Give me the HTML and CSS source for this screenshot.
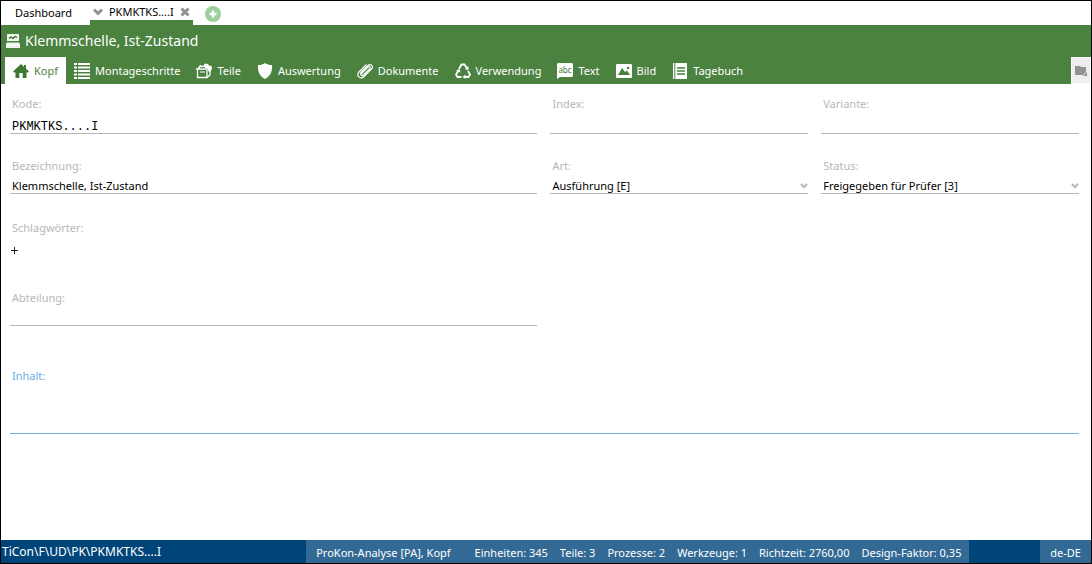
FILE: index.html
```html
<!DOCTYPE html>
<html lang="de">
<head>
<meta charset="utf-8">
<title>Klemmschelle, Ist-Zustand</title>
<link rel="stylesheet" href="styles.css">
</head>
<body>
<div class="app">
  <nav class="doc-tabs">
    <button class="doc-tab">Dashboard</button>
    <div class="doc-tab doc-tab-active">
      <svg class="chevron" viewBox="0 0 10 8"><path d="M1 1.500L5 5.500L9 1.500" fill="none" stroke="#929292" stroke-width="3"/></svg>
      <button class="doc-name">PKMKTKS....I</button>
      <button class="icon-button" aria-label="Schließen"><svg class="close" viewBox="0 0 10 10"><path d="M1.500 1.500L8.500 8.500M8.500 1.500L1.500 8.500" stroke="#929292" stroke-width="3"/></svg></button>
    </div>
    <button class="icon-button add" aria-label="Neu"><svg class="icon" viewBox="0 0 16 16"><circle cx="8" cy="8" r="8" fill="#9bcf9b"/><path d="M8 4.500V11.500M4.500 8H11.500" stroke="#fff" stroke-width="2.400"/></svg></button>
  </nav>

  <header class="header">
    <h1 class="title">
      <svg class="title-icon" viewBox="0 0 14 15"><path d="M1 0H13V7H1Z" fill="#eef4ec"/><path d="M3 4.500L5 3L7 4.500L9 2.500L11 3.500" fill="none" stroke="#33622a" stroke-width="1.200"/><path d="M1 8.500H13L14 10V14H0V10Z" fill="#eef4ec"/><path d="M1 11H13" stroke="#fff"/></svg>
      Klemmschelle, Ist-Zustand
    </h1>
    <div class="nav-row">
      <nav class="nav">
        <button class="nav-tab nav-tab-active"><svg class="icon" viewBox="0 0 16 16"><path d="M8 1L0 8.500L1.200 9.500H2.500V15H6.300V10H9.700V15H13.500V9.500H14.800L16 8.500L13 5.700V2H11V3.800Z" fill="#3f7834"/></svg>Kopf</button>
        <button class="nav-tab"><svg class="icon" viewBox="0 0 16 16"><path d="M0 1H3M0 4.500H3M0 8H3M0 11.500H3M0 15H3M4 1H16M4 4.500H16M4 8H16M4 11.500H16M4 15H16" stroke="#fff" stroke-width="1.800"/></svg>Montageschritte</button>
        <button class="nav-tab"><svg class="icon" viewBox="0 0 16 16"><path d="M1.500 6.500V14.500H11V6.500M11 14.500L14 12V6M0 6H11.500" fill="none" stroke="#fff" stroke-width="1.300"/><path d="M4 9H9" stroke="#fff"/><path d="M1 6L4 2L7 3L9 .500L12 1L13 2.500L15.500 3L16 6L14 9L12 8V6L10 5Z" fill="#fff"/><path d="M4 4.700H9" stroke="#47803c"/></svg>Teile</button>
        <button class="nav-tab"><svg class="icon" viewBox="0 0 16 16"><path d="M8 0C6 1.500 4 2 1 2C.500 9 3 13.500 8 16C13 13.500 15.500 9 15 2C12 2 10 1.500 8 0Z" fill="#fff"/></svg>Auswertung</button>
        <button class="nav-tab"><svg class="icon" viewBox="0 0 16 16"><path d="M4.500 10.500L10.500 4.500C12.500 2.500 14 4.500 12.500 6L7 11.500C4 14.500 3 10.500 4.500 9L11 2.500C13.500 0 17 3.500 14.500 6L7 13.500C3.500 17-1.500 12.500 2 9L9 2" fill="none" stroke="#fff" stroke-width="1.200" stroke-linecap="round"/></svg>Dokumente</button>
        <button class="nav-tab"><svg class="icon" viewBox="0 0 16 16"><path d="M4 6L6.500 1.500H9.500L12 5.500M13 8L15 11.500L13.500 14H9M6.500 14H2.500L1 11.500L3.500 7.500" fill="none" stroke="#fff" stroke-width="1.800"/><path d="M10 6.500L13.500 7V3ZM10.500 11.500L7.500 14L10.500 16ZM1 7.500L4.500 6L5.500 9.500Z" fill="#fff"/></svg>Verwendung</button>
        <button class="nav-tab"><svg class="icon" viewBox="0 0 16 16"><path d="M1 0H15L16 1V13L15 14H3L0 16V1Z" fill="#fff"/><text class="icon-letters" x="8" y="10" text-anchor="middle">abc</text></svg>Text</button>
        <button class="nav-tab"><svg class="icon" viewBox="0 0 16 16"><rect y="1" width="16" height="14" rx="1" fill="#fff"/><path d="M2 12L6 5L9 9L11 7.500L14 12Z" fill="#47803c"/><circle cx="12" cy="5" r="1.300" fill="#47803c"/></svg>Bild</button>
        <button class="nav-tab"><svg class="icon" viewBox="0 0 16 16"><path d="M1 0H2.300V16H1ZM3.300 0H15V16H3.300Z" fill="#fff"/><path d="M5 5H13M5 8H13M5 11H13" stroke="#47803c" stroke-width="1.300"/></svg>Tagebuch</button>
      </nav>
      <button class="folder-button" aria-label="Ordner"><svg class="folder" viewBox="0 0 14 12"><path d="M1 1H6L7 2H12V10H1Z" fill="#929292"/><path d="M8 11.500L13.500 6V11.500Z" fill="#929292" stroke="#eee"/></svg></button>
    </div>
  </header>

  <main class="form">
    <div class="field"><label for="kode">Kode:</label><input class="control control-tall mono" id="kode" value="PKMKTKS....I"></div>
    <div class="field"><label for="index">Index:</label><input class="control control-tall" id="index"></div>
    <div class="field"><label for="variante">Variante:</label><input class="control control-tall" id="variante"></div>
    <div class="field"><label for="bez">Bezeichnung:</label><input class="control" id="bez" value="Klemmschelle, Ist-Zustand"></div>
    <div class="field"><label for="art">Art:</label><select class="control" id="art"><option>Ausführung [E]</option></select><svg class="select-arrow" viewBox="0 0 8 6"><path d="M1 1L4 4L7 1" fill="none" stroke="#bcbcbc" stroke-width="2.400"/></svg></div>
    <div class="field"><label for="status">Status:</label><select class="control" id="status"><option>Freigegeben für Prüfer [3]</option></select><svg class="select-arrow" viewBox="0 0 8 6"><path d="M1 1L4 4L7 1" fill="none" stroke="#bcbcbc" stroke-width="2.400"/></svg></div>
    <div class="field tags"><span class="label">Schlagwörter:</span><button class="plus" aria-label="Schlagwort hinzufügen"><svg class="plus-icon" viewBox="0 0 7 7"><path d="M3.500 0V7M0 3.500H7" stroke="#222"/></svg></button></div>
    <div class="field department"><label for="abt">Abteilung:</label><input class="control" id="abt"></div>
    <div class="field content-field"><label for="inhalt">Inhalt:</label><textarea class="control content-text" id="inhalt"></textarea></div>
  </main>

  <footer class="status">
    <span class="path">TiCon\F\UD\PK\PKMKTKS....I</span>
    <div class="facts">
      <span class="module">ProKon-Analyse [PA], Kopf</span><span>Einheiten: 345</span><span>Teile: 3</span><span>Prozesse: 2</span><span>Werkzeuge: 1</span><span>Richtzeit: 2760,00</span><span>Design-Faktor: 0,35</span>
    </div>
    <span class="locale">de-DE</span>
  </footer>
</div>
</body>
</html>
```
FILE: styles.css
```css
* { box-sizing: border-box; }
body { margin: 0; font: 11px/16px "Noto Sans", "Open Sans", sans-serif; color: #000; background: #fff; }
button { margin: 0; padding: 0; border: 0; background: none; font: inherit; color: inherit; white-space: nowrap; }
svg { display: block; flex: none; }
.app { display: flex; flex-direction: column; min-height: 100vh; border: 1px solid #000; }
.icon { width: 16px; height: 16px; }

.doc-tabs { display: flex; height: 24px; }
.doc-tab { height: 24px; padding: 0 14px; }
.doc-tab-active { display: flex; align-items: center; gap: 6px; margin-left: 4px; padding: 3px 3px 0; border-bottom: 5px solid #4b823f; }
.chevron { width: 10px; height: 8px; }
.close { width: 10px; height: 10px; }
.add { margin-left: 12px; padding-top: 2px; }

.header { background: #4b823f; color: #fff; }
.title { display: flex; align-items: center; gap: 5px; height: 32px; margin: 0; padding: 0 5px; font-size: 14px; font-weight: 400; }
.title-icon { width: 14px; height: 15px; }
.nav-row { display: flex; justify-content: space-between; }
.nav { display: flex; padding-left: 4px; }
.nav-tab { display: flex; align-items: center; gap: 5px; height: 27px; padding: 0 8px; }
.nav-tab-active { background: #fff; color: #4b823f; }
.icon-letters { font: 8px "Noto Sans", sans-serif; fill: #47803c; }
.folder-button { display: flex; align-items: center; justify-content: center; width: 20px; background: #eee; border: 1px solid #fff; }
.folder { width: 14px; height: 12px; }

.form {
  flex: 1;
  display: grid;
  grid-template-columns: 528fr 258fr 258fr;
  grid-template-rows: 62px 62px 70px 78px auto;
  column-gap: 13px;
  align-content: start;
  padding: 12px 12px 0 9px;
}
.field { position: relative; display: flex; flex-direction: column; }
.field label, .label { padding-left: 2px; color: #b7b7b7; }
.control { width: 100%; height: 20px; margin: 0; padding: 4px 2px 0; border: 0; border-bottom: 1px solid #b7b7b7; border-radius: 0; background: none; font: inherit; line-height: 15px; color: #000; outline: 0; appearance: none; }
.control-tall { height: 22px; padding-top: 8px; }
.mono { font-family: "Liberation Mono", monospace; font-size: 12px; }
.select-arrow { position: absolute; right: 0; top: 25px; width: 8px; height: 6px; pointer-events: none; }
.tags, .department, .content-field { grid-column: 1; }
.plus { align-self: flex-start; padding: 11px 1px; }
.plus-icon { width: 7px; height: 7px; }
.content-field { grid-column: 1 / -1; }
.content-field label { color: #6cace0; }
.content-text { height: 50px; border-color: #7cace0; resize: none; }

.status { display: flex; height: 23px; line-height: 26px; background: #00457a; color: #fff; white-space: nowrap; }
.path { flex: 0 0 28%; padding-left: 1px; font-size: 12px; line-height: 24px; }
.facts { display: flex; gap: 12px; padding: 0 8px 0 10px; background: #336a95; }
.module { padding-right: 12px; }
.locale { margin-left: auto; padding: 0 10px; background: #336a95; }
```
